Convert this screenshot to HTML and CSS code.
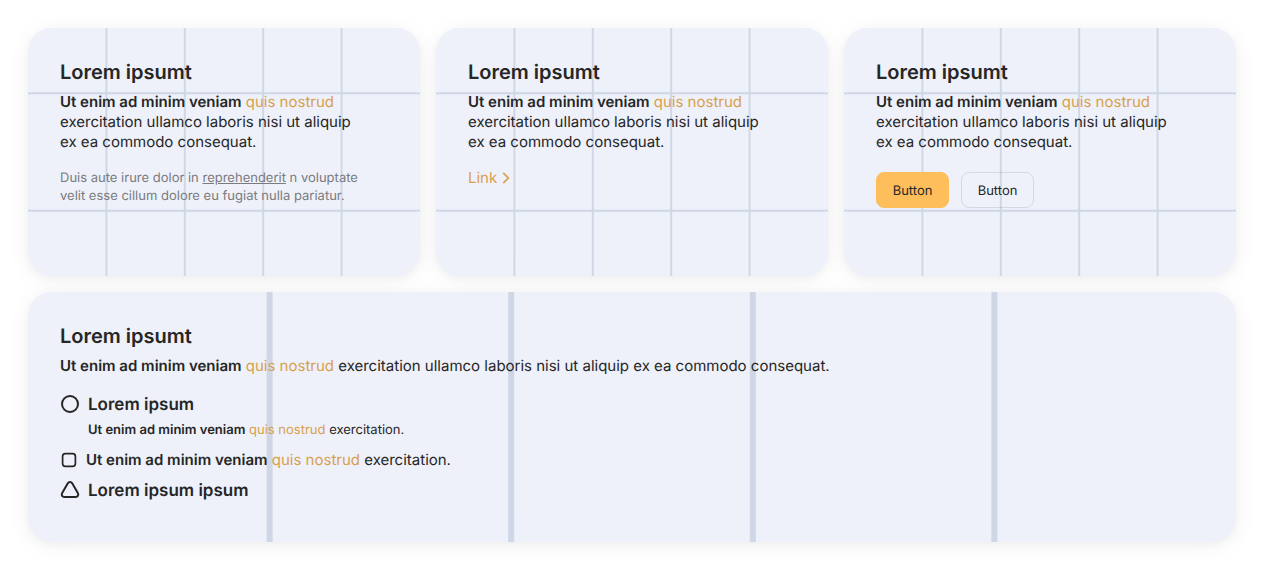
FILE: index.html
```html
<!DOCTYPE html>
<html lang="en">
<head>
<meta charset="utf-8">
<meta name="viewport" content="width=device-width, initial-scale=1">
<title>Content cards</title>
<link rel="stylesheet" href="styles.css">
</head>
<body>
<svg class="defs" aria-hidden="true">
  <symbol id="grid" viewBox="0 0 1000 900" preserveAspectRatio="xMidYMid slice">
    <path d="M200 0V900M400 0V900M600 0V900M800 0V900M0 300H1000M0 600H1000" fill="none" stroke="#cfd7e6" stroke-width="5"/>
  </symbol>
</svg>
<main class="cards">
  <article class="card">
    <svg class="card-grid" aria-hidden="true"><use href="#grid"/></svg>
    <div class="card-content">
      <h2 class="title">Lorem ipsumt</h2>
      <p class="text"><b>Ut enim ad minim veniam</b> <a class="accent" href="#">quis nostrud</a> exercitation ullamco laboris nisi ut aliquip ex ea commodo consequat.</p>
      <p class="note">Duis aute irure dolor in <a class="note-link" href="#">reprehenderit</a> n voluptate velit esse cillum dolore eu fugiat nulla pariatur.</p>
    </div>
  </article>
  <article class="card">
    <svg class="card-grid" aria-hidden="true"><use href="#grid"/></svg>
    <div class="card-content">
      <h2 class="title">Lorem ipsumt</h2>
      <p class="text"><b>Ut enim ad minim veniam</b> <a class="accent" href="#">quis nostrud</a> exercitation ullamco laboris nisi ut aliquip ex ea commodo consequat.</p>
      <a class="accent more" href="#">Link<svg class="chevron" viewBox="0 0 8 12" aria-hidden="true"><path d="M1.2 .8L6.4 6 1.2 11.2"/></svg></a>
    </div>
  </article>
  <article class="card">
    <svg class="card-grid" aria-hidden="true"><use href="#grid"/></svg>
    <div class="card-content">
      <h2 class="title">Lorem ipsumt</h2>
      <p class="text"><b>Ut enim ad minim veniam</b> <a class="accent" href="#">quis nostrud</a> exercitation ullamco laboris nisi ut aliquip ex ea commodo consequat.</p>
      <div class="buttons">
        <button class="button button-action" type="button">Button</button>
        <button class="button button-outlined" type="button">Button</button>
      </div>
    </div>
  </article>
  <article class="card card-wide">
    <svg class="card-grid" aria-hidden="true"><use href="#grid"/></svg>
    <div class="card-content">
      <h2 class="title">Lorem ipsumt</h2>
      <p class="text"><b>Ut enim ad minim veniam</b> <a class="accent" href="#">quis nostrud</a> exercitation ullamco laboris nisi ut aliquip ex ea commodo consequat.</p>
      <ul class="list">
        <li class="item">
          <svg class="icon" viewBox="0 0 20 20" aria-hidden="true"><circle cx="10" cy="10" r="8"/></svg>
          <div class="item-body">
            <h3 class="item-title">Lorem ipsum</h3>
            <p class="item-text"><b>Ut enim ad minim veniam</b> <a class="accent" href="#">quis nostrud</a> exercitation.</p>
          </div>
        </li>
        <li class="item item-compact">
          <svg class="icon icon-small" viewBox="0 0 18 18" aria-hidden="true"><rect x="2.6" y="2.6" width="12.8" height="12.8" rx="2.8"/></svg>
          <p class="text-plain"><b>Ut enim ad minim veniam</b> <a class="accent" href="#">quis nostrud</a> exercitation.</p>
        </li>
        <li class="item">
          <svg class="icon" viewBox="0 0 20 20" aria-hidden="true"><path d="M7.8 3.2C8.8 1.5 11.2 1.5 12.2 3.2L17.8 13C19 15 17.8 17.1 15.6 17.1H4.4C2.2 17.1 1 15 2.2 13Z"/></svg>
          <h3 class="item-title">Lorem ipsum ipsum</h3>
        </li>
      </ul>
    </div>
  </article>
</main>
</body>
</html>
```
FILE: styles.css
```css
* {
  box-sizing: border-box;
}

body {
  margin: 0;
  padding: 28px;
  background: #fff;
  color: #262626;
  font: 15px/20px Inter, "Liberation Sans", sans-serif;
  font-optical-sizing: none;
  text-rendering: geometricPrecision;
}

h2, h3, p, ul {
  margin: 0;
  padding: 0;
}

b {
  font-weight: 600;
}

.defs {
  position: absolute;
  width: 0;
  height: 0;
}

.cards {
  display: grid;
  grid-template-columns: repeat(3, 1fr);
  gap: 16px;
}

.card {
  position: relative;
  min-height: 248px;
  padding: 32px 52px 32px 32px;
  border-radius: 24px;
  background: #eef1f9;
  box-shadow: 0 4px 24px rgba(0, 0, 0, 0.05), 0 2px 8px rgba(0, 0, 0, 0.04);
}

.card-wide {
  grid-column: 1 / -1;
  padding-bottom: 39px;
}

.card-grid {
  position: absolute;
  inset: 0;
  width: 100%;
  height: 100%;
  border-radius: 24px;
}

.card-content {
  position: relative;
}

.title {
  font-size: 20px;
  line-height: 24px;
  font-weight: 600;
}

.text {
  margin-top: 8px;
}

.accent {
  color: #d99f4d;
  text-decoration: none;
}

.note {
  margin-top: 17px;
  color: #7a7b7f;
  font-size: 13px;
  line-height: 18px;
}

.note-link {
  color: inherit;
}

.more {
  display: inline-flex;
  align-items: center;
  gap: 5px;
  margin-top: 16px;
}

.chevron {
  width: 8px;
  height: 12px;
  fill: none;
  stroke: currentColor;
  stroke-width: 1.7;
}

.buttons {
  display: flex;
  gap: 12px;
  margin-top: 20px;
}

.button {
  min-width: 73px;
  height: 36px;
  padding: 2px 15px 0;
  border: 1px solid transparent;
  border-radius: 8px;
  background: none;
  color: #262626;
  font: 13px/18px Inter, "Liberation Sans", sans-serif;
  font-optical-sizing: none;
  text-rendering: geometricPrecision;
}

.button-action {
  border-color: #ffbe5c;
  background: #ffbe5c;
}

.button-outlined {
  border-color: rgba(0, 0, 0, 0.1);
}

.list {
  margin-top: 17px;
  list-style: none;
}

.item {
  display: flex;
  gap: 8px;
}

.item-compact {
  margin: 11px 0 9px;
}

.icon {
  flex: none;
  width: 20px;
  height: 20px;
  margin-top: 1px;
  fill: none;
  stroke: #262626;
  stroke-width: 2;
}

.icon-small {
  width: 18px;
  height: 18px;
  stroke-width: 1.7;
}

.item-title {
  font-size: 17px;
  line-height: 24px;
  font-weight: 600;
}

.item-text {
  margin-top: 4px;
  font-size: 13px;
  line-height: 18px;
}
```
